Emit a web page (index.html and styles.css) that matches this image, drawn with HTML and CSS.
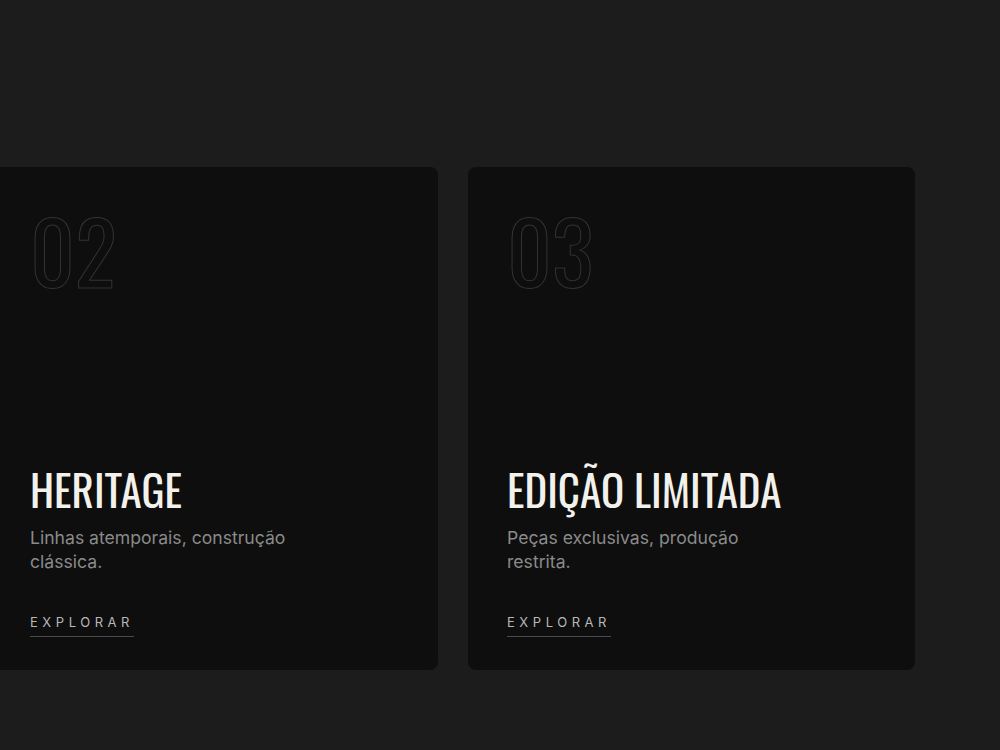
FILE: index.html
```html
<!DOCTYPE html>
<html lang="pt">
  <head>
    <meta charset="utf-8">
    <meta name="viewport" content="width=device-width, initial-scale=1" />
    <title>Coleções</title>
    <link rel="stylesheet" href="styles.css">
  </head>
  <body>
    <main class="collections">
      <ul class="collection-list">
        <li class="collection-card">
          <span class="collection-num">02</span>
          <div class="collection-body">
            <h2 class="collection-title">HERITAGE</h2>
            <p class="collection-desc">Linhas atemporais, construção clássica.</p>
            <a class="collection-link" href="#">Explorar</a>
          </div>
        </li>
        <li class="collection-card">
          <span class="collection-num">03</span>
          <div class="collection-body">
            <h2 class="collection-title">EDIÇÃO LIMITADA</h2>
            <p class="collection-desc">Peças exclusivas, produção restrita.</p>
            <a class="collection-link" href="#">Explorar</a>
          </div>
        </li>
      </ul>
    </main>
  </body>
</html>
```

FILE: styles.css
```css
* {
  box-sizing: border-box;
  margin: 0;
  padding: 0;
}
ul {
  list-style: none;
}
html,
body {
  height: 100%;
}
body {
  background-color: #1c1c1c;
  font-family: Inter, "Noto Sans", sans-serif;
  overflow: hidden;
}
.collections {
  padding-top: 167px;
}
.collection-list {
  display: flex;
  gap: 30px;
  margin-left: -9px;
}
.collection-card {
  display: flex;
  flex-direction: column;
  justify-content: space-between;
  flex: 0 0 447px;
  height: 503px;
  padding: 38px 39px 33px;
  border-radius: 8px;
  background-color: #0e0e0e;
}
.collection-num {
  font-family: Oswald, "Roboto Condensed", sans-serif;
  font-size: 87px;
  font-weight: 400;
  line-height: 1;
  color: transparent;
  -webkit-text-stroke: 1px #333;
}
.collection-title {
  font-family: Oswald, "Roboto Condensed", sans-serif;
  font-size: 43px;
  font-weight: 400;
  line-height: 1.2;
  color: #f3f1eb;
}
.collection-desc {
  max-width: 280px;
  margin: 11px 0 37px;
  font-size: 17.6px;
  line-height: 24px;
  color: #8a8a8a;
}
.collection-link {
  display: inline-block;
  padding-bottom: 6px;
  border-bottom: 1px solid #4a4a4a;
  font-size: 13px;
  letter-spacing: .35em;
  text-transform: uppercase;
  text-decoration: none;
  color: #b8b8b8;
}
```
